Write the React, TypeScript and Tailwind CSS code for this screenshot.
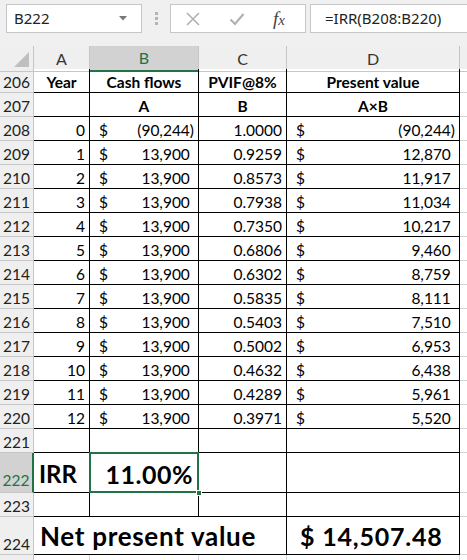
import React from 'react';

const cols = 'grid grid-cols-[34px_56px_109px_88px_173px_1fr]';
const cellFont = { fontFamily: 'Lato, "Noto Sans", sans-serif' };

const rows = [
  [0, '(90,244)', '1.0000', '(90,244)'],
  [1, '13,900', '0.9259', '12,870'],
  [2, '13,900', '0.8573', '11,917'],
  [3, '13,900', '0.7938', '11,034'],
  [4, '13,900', '0.7350', '10,217'],
  [5, '13,900', '0.6806', '9,460'],
  [6, '13,900', '0.6302', '8,759'],
  [7, '13,900', '0.5835', '8,111'],
  [8, '13,900', '0.5403', '7,510'],
  [9, '13,900', '0.5002', '6,953'],
  [10, '13,900', '0.4632', '6,438'],
  [11, '13,900', '0.4289', '5,961'],
  [12, '13,900', '0.3971', '5,520'],
];

const RowHead = ({ n, active }: { n?: number; active?: boolean }) => (
  <div
    className={
      active
        ? 'flex items-end justify-center pb-[3px] bg-[#d2d2d2] text-[#217346] font-normal border-b border-[#c6c6c6] border-r-2 border-r-[#217346] text-[15.5px] leading-[18px]'
        : 'flex items-end justify-center pb-[1px] bg-[#efefef] text-[#222] font-normal border-b border-r border-[#c6c6c6] text-[15.5px] leading-[18px]'
    }
  >
    {n}
  </div>
);

// accounting style: "$" on the left, number on the right, room kept for ")"
const Money = ({ v }: { v: string }) => {
  const neg = v.startsWith('(');
  return (
    <div className="flex items-end justify-between pl-[9px] pr-[4px] pb-[1px] border-r border-b border-black">
      <span>$</span>
      <span>
        {v}
        {!neg && <span className="invisible">)</span>}
      </span>
    </div>
  );
};

const Blank = () => <div className="border-b border-[#d4d4d4]" />;
const Box = () => <div className="border-r border-b border-black" />;

const Toolbar = () => (
  <div className="h-[46px] bg-[#f0f0f0]" style={{ fontFamily: '"Noto Sans", sans-serif' }}>
    <div className="flex items-start pt-[4px] pl-[6px]">
      <div className="w-[136px] h-[29px] bg-white border border-[#c6c6c6] flex items-center justify-between pl-[7px] pr-[14px] text-[15px] text-[#222]">
        <span>B222</span>
        <svg width="8" height="5" viewBox="0 0 8 5">
          <path d="M0 0h8L4 4.5z" fill="#777" />
        </svg>
      </div>
      <div className="w-[28px] h-[29px] flex flex-col items-center justify-center gap-[2px]">
        <span className="w-[3px] h-[3px] bg-[#b4b4b4]" />
        <span className="w-[3px] h-[3px] bg-[#b4b4b4]" />
        <span className="w-[3px] h-[3px] bg-[#b4b4b4]" />
      </div>
      <div className="w-[136px] h-[29px] bg-white border border-[#c6c6c6] flex items-center">
        <svg className="ml-[14px]" width="16" height="16" viewBox="0 0 16 16">
          <path d="M2 2l12 12M14 2L2 14" stroke="#b0b0b0" strokeWidth="1.6" />
        </svg>
        <svg className="ml-[28px]" width="16" height="16" viewBox="0 0 16 16">
          <path d="M1.5 8.5l4.5 4.5L14.5 3" stroke="#b0b0b0" strokeWidth="2.2" fill="none" />
        </svg>
        <span
          className="ml-[28px] text-[19px] italic text-[#444] leading-none"
          style={{ fontFamily: '"Liberation Serif", serif' }}
        >
          f<span className="text-[15px]">x</span>
        </span>
      </div>
      <div className="ml-[4px] flex-1 h-[29px] bg-white border border-[#c6c6c6] border-r-0 flex items-center pl-[14px] text-[15px] text-[#222]">
        =IRR(B208:B220)
      </div>
    </div>
  </div>
);

const ColHeads = () => (
  <div className={`${cols} h-[23px] bg-[#efefef] text-[16px] text-[#333]`} style={cellFont}>
    <div className="relative border-r border-b border-[#c6c6c6]">
      <svg className="absolute right-[4px] bottom-[4px]" width="15" height="15" viewBox="0 0 15 15">
        <path d="M15 0V15H0z" fill="#bfbfbf" />
      </svg>
    </div>
    <div className="flex items-center justify-center border-r border-b border-[#c6c6c6]">A</div>
    <div className="flex items-center justify-center bg-[#d2d2d2] text-[#217346] border-r border-[#c6c6c6] border-b-2 border-b-[#217346]">
      B
    </div>
    <div className="flex items-center justify-center border-r border-b border-[#c6c6c6]">C</div>
    <div className="flex items-center justify-center border-r border-b border-[#c6c6c6]">D</div>
    <div className="border-b border-[#c6c6c6]" />
  </div>
);

export default function App() {
  return (
    <div className="w-[467px] h-[560px] overflow-hidden bg-white">
      <Toolbar />
      <ColHeads />
      <div className="text-[15.5px] leading-[18px] text-black" style={cellFont}>
        <div className={`${cols} h-[24px]`}>
          <RowHead n={206} />
          <div className="flex items-end justify-center pb-[1px] font-bold border-r border-b border-black">Year</div>
          <div className="flex items-end justify-center pb-[1px] font-bold border-r border-b border-black">Cash flows</div>
          <div className="flex items-end justify-center pb-[1px] font-bold border-r border-b border-black">PVIF@8%</div>
          <div className="flex items-end justify-center pb-[1px] font-bold border-r border-b border-black">Present value</div>
          <Blank />
        </div>
        <div className={`${cols} h-[24px]`}>
          <RowHead n={207} />
          <Box />
          <div className="flex items-end justify-center pb-[1px] font-bold border-r border-b border-black">A</div>
          <div className="flex items-end justify-center pb-[1px] font-bold border-r border-b border-black">B</div>
          <div className="flex items-end justify-center pb-[1px] font-bold border-r border-b border-black">A×B</div>
          <Blank />
        </div>
        {rows.map(([y, cf, pv, val], i) => (
          <div key={i} className={`${cols} h-[24px]`}>
            <RowHead n={208 + i} />
            <div className="flex items-end justify-end pr-[4px] pb-[1px] border-r border-b border-black">{y}</div>
            <Money v={cf as string} />
            <div className="flex items-end justify-end pr-[4px] pb-[1px] border-r border-b border-black">{pv}</div>
            <Money v={val as string} />
            <Blank />
          </div>
        ))}
        <div className={`${cols} h-[24px]`}>
          <RowHead n={221} />
          <Box />
          <Box />
          <Box />
          <Box />
          <Blank />
        </div>
        <div className={`${cols} h-[40px]`}>
          <RowHead n={222} active />
          <div className="flex items-end pl-[5px] pb-[4px] border-r border-b border-black text-[24px] leading-[28px] font-bold">
            IRR
          </div>
          <div className="relative flex items-end justify-end pr-[5px] pb-[4px] border-r border-b border-black text-[25px] leading-[28px] font-bold tracking-[0.5px]">
            11.00%
            <div className="absolute -left-[1px] -top-[1px] -right-[1px] -bottom-[1px] border-2 border-[#217346]" />
            <div className="absolute -right-[4px] -bottom-[4px] w-[6px] h-[6px] bg-[#217346] border border-white" />
          </div>
          <Box />
          <Box />
          <Blank />
        </div>
        <div className={`${cols} h-[24px]`}>
          <RowHead n={223} />
          <Box />
          <Box />
          <Box />
          <Box />
          <Blank />
        </div>
        <div className={`${cols} h-[38px]`}>
          <RowHead n={224} />
          <div className="col-span-3 flex items-end pl-[6px] pb-[4px] border-r border-b border-black text-[26px] leading-[28px] font-bold tracking-[0.7px] whitespace-nowrap">
            Net present value
          </div>
          <div className="flex items-end pl-[13px] pb-[4px] border-r border-b border-black text-[25px] leading-[28px] font-bold tracking-[0.8px] whitespace-nowrap">
            $ 14,507.48
          </div>
          <Blank />
        </div>
        <div className={`${cols} h-[24px]`}>
          <RowHead />
          <div className="border-r border-b border-[#d4d4d4]" />
          <div className="border-r border-b border-[#d4d4d4]" />
          <div className="border-r border-b border-[#d4d4d4]" />
          <div className="border-r border-b border-[#d4d4d4]" />
          <Blank />
        </div>
      </div>
    </div>
  );
}
